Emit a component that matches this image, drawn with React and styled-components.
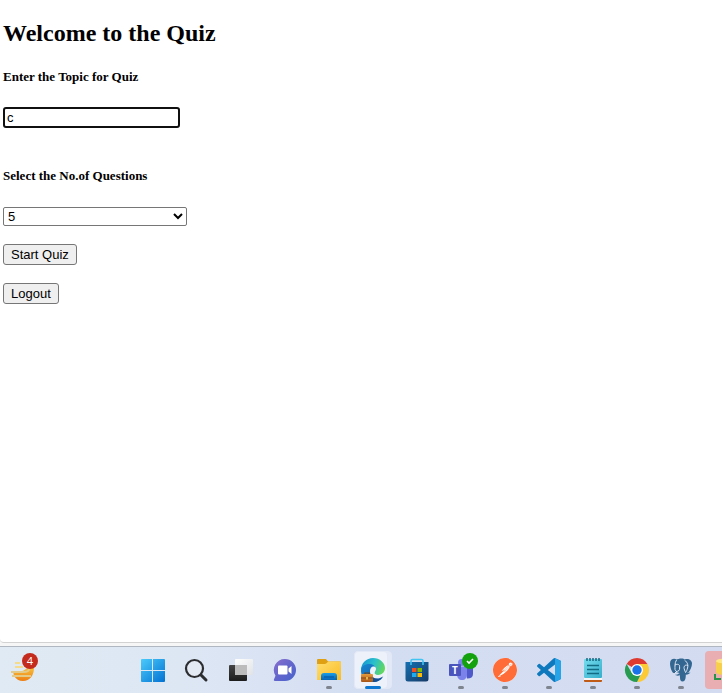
import React, { useState } from "react";
import styled, { createGlobalStyle, css } from "styled-components";
import { SiPostman } from "react-icons/si";

const GlobalStyle = createGlobalStyle`
  *, *::before, *::after { box-sizing: border-box; }
  body { margin: 0; background: #fff; overflow: hidden; }
`;

const Screen = styled.div`
  display: flex;
  flex-direction: column;
  min-height: 100vh;
  background: #f6f6f6;
  overflow: hidden;
`;

const Page = styled.main`
  flex: 1;
  padding: 20px 3px;
  margin-bottom: 3px;
  background: #fff;
  border-bottom: 1px solid #d2d2d2;
  border-bottom-left-radius: 4px;
  color: #000;
  font-family: "Liberation Serif", "Times New Roman", serif;
`;

const Title = styled.h2`
  margin: 0 0 22px;
  font-size: 24px;
  line-height: 27px;
  font-weight: bold;
`;

const Form = styled.form`
  display: flex;
  flex-direction: column;
  align-items: flex-start;
`;

const Field = styled.div`
  display: flex;
  flex-direction: column;
  align-items: flex-start;
  gap: ${(p) => p.$gap};
  margin-bottom: ${(p) => p.$after};
`;

const Label = styled.label`
  font-size: 13px;
  line-height: 15px;
  font-weight: bold;
`;

const controlFont = css`
  font-family: "Liberation Sans", Arial, sans-serif;
  font-size: 13px;
  color: #000;
`;

const TopicInput = styled.input`
  ${controlFont}
  width: 177px;
  height: 21px;
  padding: 0 2px;
  border: 2px solid #101010;
  border-radius: 3px;
  background: #fff;
  outline: none;
`;

const CountSelect = styled.select`
  ${controlFont}
  width: 184px;
  height: 19px;
  border: 1px solid #767676;
  border-radius: 2px;
  background: #fff;
`;

const Buttons = styled.div`
  display: flex;
  flex-direction: column;
  align-items: flex-start;
  gap: 18px;
`;

const Button = styled.button`
  ${controlFont}
  height: 21px;
  padding: 0 7px;
  border: 1px solid #767676;
  border-radius: 3px;
  background: #efefef;
`;

const Taskbar = styled.nav`
  display: flex;
  flex: none;
  padding: 4px 0 4px 1px;
  border-top: 1px solid #b1b7c1;
  background: linear-gradient(90deg, #dfeaf4 0%, #dde7f4 25%, #d4def2 50%, #d3dbf0 100%);
`;

const Apps = styled.div`
  display: flex;
  margin-left: 86px;
`;

const Task = styled.button`
  position: relative;
  display: flex;
  flex: none;
  align-items: center;
  justify-content: center;
  width: 44px;
  height: 38px;
  padding: 0;
  border: 0;
  background: none;

  svg {
    position: relative;
    display: block;
    overflow: visible;
  }

  ${(p) => p.$active && css`
    &::before, &::after {
      content: "";
      position: absolute;
      top: 0;
      bottom: 0;
      left: 3px;
      border-radius: 4px;
      border: 1px solid #e2e8f5;
    }
    &::before { right: 3px; background: #e3e9f6; }
    &::after { right: 7px; background: #edf1fa; }
    svg { z-index: 1; }
  `}

  ${(p) => p.$alert && css`
    margin-left: 2px;
    width: 40px;
    border-radius: 4px;
    background: #e8aeb1;
  `}
`;

const Indicator = styled.span`
  position: absolute;
  z-index: 2;
  bottom: 0;
  left: 50%;
  transform: translateX(-50%);
  width: ${(p) => (p.$active ? "16px" : "6px")};
  height: 3px;
  border-radius: 2px;
  background: ${(p) => (p.$active ? "#0c76d1" : "#7e858f")};
`;

const Badge = styled.span`
  position: absolute;
  z-index: 2;
  top: 2px;
  left: 21px;
  width: 16px;
  height: 16px;
  border-radius: 50%;
  background: #c42b1c;
  color: #fff;
  font: 11px/16px "Open Sans", sans-serif;
  text-align: center;
`;

const PostmanDisc = styled.span`
  display: flex;
  border-radius: 50%;
  background: #fff;
  color: #ff6c37;
`;

const Svg = ({ children }) => (
  <svg width="24" height="24" viewBox="0 0 24 24" aria-hidden="true">{children}</svg>
);

const WidgetIcon = () => (
  <Svg>
    <defs>
      <linearGradient id="sun" x1="0" y1="0" x2="0" y2="1">
        <stop offset="0" stopColor="#f8bf3c" /><stop offset="1" stopColor="#ee7d12" />
      </linearGradient>
    </defs>
    <path d="M2 13h9c3 0 3-3 7-3h5c0 7-4 13-11 13-4 0-7-2-9-5z" fill="url(#sun)" />
    <path d="M4 5h5M4 9h8" stroke="#f5dc8c" strokeWidth="2" />
    <path d="M0 14h12c4 0 6-1 6-3M1 18h19" fill="none" stroke="#e4ca88" strokeWidth="2" />
  </Svg>
);

const WindowsIcon = () => (
  <Svg>
    <defs>
      <linearGradient id="win" x1="0" y1="0" x2="1" y2="1">
        <stop offset="0" stopColor="#4bcbfb" /><stop offset="1" stopColor="#0271d2" />
      </linearGradient>
    </defs>
    <path d="M1 1h10v11H0V2a1 1 0 0 1 1-1zM12 1h11a1 1 0 0 1 1 1v10H12zM0 13h11v11H1a1 1 0 0 1-1-1zM12 13h12v10a1 1 0 0 1-1 1H12z" fill="url(#win)" />
  </Svg>
);

const SearchIcon = () => (
  <Svg>
    <circle cx="9.500" cy="10.500" r="8.500" fill="#e9edf2" fillOpacity=".6" stroke="#2c2d30" strokeWidth="2.200" />
    <path d="M16 17l5 5" stroke="#2c2d30" strokeWidth="3" strokeLinecap="round" />
  </Svg>
);

const TaskViewIcon = () => (
  <Svg>
    <defs>
      <linearGradient id="dark" x1="0" y1="0" x2="0" y2="1">
        <stop offset="0" stopColor="#454545" /><stop offset="1" stopColor="#1c1c1c" />
      </linearGradient>
      <linearGradient id="pale" x1="0" y1="0" x2="1" y2="1">
        <stop offset="0" stopColor="#fff" /><stop offset="1" stopColor="#e0e2e5" />
      </linearGradient>
    </defs>
    <rect x="0" y="7" width="18" height="16" rx="1" fill="url(#dark)" />
    <rect x="6" y="1" width="18" height="16" rx="1" fill="url(#pale)" />
    <path d="M6 7h12v10H7a1 1 0 0 1-1-1z" fill="#bcbcbd" />
  </Svg>
);

const ChatIcon = () => (
  <Svg>
    <defs>
      <linearGradient id="chat" x1="0" y1="0" x2="1" y2="1">
        <stop offset="0" stopColor="#8a70ce" /><stop offset=".5" stopColor="#6265cc" /><stop offset="1" stopColor="#4662cc" />
      </linearGradient>
    </defs>
    <path d="M12 1a11 11 0 1 1 0 22H2c-1 0-1.500-.8-1-1.700l1.500-3.500A11 11 0 0 1 12 1z" fill="url(#chat)" />
    <rect x="5" y="7.500" width="9.500" height="9" rx="1" fill="#fff" />
    <path d="M15.500 10.500l3-2.500v8l-3-2.500z" fill="#fff" />
  </Svg>
);

const FolderIcon = () => (
  <Svg>
    <defs>
      <linearGradient id="folder" x1="0" y1="0" x2="1" y2="1">
        <stop offset="0" stopColor="#ffdf70" /><stop offset="1" stopColor="#fabb22" />
      </linearGradient>
      <linearGradient id="tray" x1="0" y1="0" x2="0" y2="1">
        <stop offset="0" stopColor="#1b9de6" /><stop offset="1" stopColor="#0765b7" />
      </linearGradient>
    </defs>
    <path d="M0 2a1 1 0 0 1 1-1h8l2 2.500h12a1 1 0 0 1 1 1V9H0z" fill="#dfa013" />
    <path d="M0 6h8c2 0 2-2.500 4-2.500h11a1 1 0 0 1 1 1V22H0z" fill="url(#folder)" />
    <path d="M4 22v-4a3 3 0 0 1 3-3h10a3 3 0 0 1 3 3v4z" fill="url(#tray)" />
    <path d="M7 19h10" stroke="#0962ac" strokeWidth="1.500" />
  </Svg>
);

const EdgeIcon = () => (
  <Svg>
    <defs>
      <linearGradient id="edgeTop" x1="0" y1=".3" x2="1" y2=".6">
        <stop offset="0" stopColor="#1597d4" /><stop offset=".5" stopColor="#2bc0cc" /><stop offset="1" stopColor="#66d957" />
      </linearGradient>
      <linearGradient id="edgeSide" x1="0" y1="0" x2="1" y2="1">
        <stop offset="0" stopColor="#1a86cf" /><stop offset="1" stopColor="#0b5dae" />
      </linearGradient>
      <linearGradient id="case" x1="0" y1="0" x2="0" y2="1">
        <stop offset="0" stopColor="#e59a3c" /><stop offset="1" stopColor="#a65416" />
      </linearGradient>
    </defs>
    <path d="M0 12A12 12 0 0 1 12 0c7 0 12 5 12 10 0 4-3 7-7 7-3 0-5-1-4-3l-2-4-7 0z" fill="url(#edgeTop)" />
    <path d="M0 13C0 8 4 6 8 6c4 0 6 2 6.500 4C11 9 9 12 9.500 15c.5 3 4 6 8 6 2 0 4-1 5-3-2 4-6 6-10.500 6C5 24 0 19 0 13z" fill="url(#edgeSide)" />
    <path d="M9 14c0 5 4 7 8 6.500 2-.3 4-1.200 5-2.500-2 4-6 6-10 6-4-1-5-7-3-10z" fill="#124f96" />
    <path d="M9 13c0-3 2-5 4-4.500 2.500.5 2.500 3 1 5-1 2 0 3.500 3 3.500 2.500 0 4-.5 5-1.500 0 2-1 3-2 3.500-5 2.500-11-1-11-6z" fill="#edf1fa" />
    <path d="M4 17v-2h4v2" fill="none" stroke="#75420f" strokeWidth="1.200" />
    <rect x="0" y="16" width="12" height="8" rx="1" fill="url(#case)" />
    <path d="M0 20h12" stroke="#874512" />
    <path d="M6 19v2.500" stroke="#ffd35c" strokeWidth="1.500" />
  </Svg>
);

const StoreIcon = () => (
  <Svg>
    <defs>
      <linearGradient id="bag" x1="0" y1="0" x2="1" y2="1">
        <stop offset="0" stopColor="#1570b1" /><stop offset="1" stopColor="#173b67" />
      </linearGradient>
    </defs>
    <path d="M.5 4h23v17a2.500 2.500 0 0 1-2.500 2.500H3A2.500 2.500 0 0 1 .5 21z" fill="url(#bag)" />
    <path d="M6 7V3a1.500 1.500 0 0 1 1.500-1.500h9A1.500 1.500 0 0 1 18 3v4" fill="none" stroke="#42c4f2" strokeWidth="1.600" />
    <path d="M7 10h4.500v4H7z" fill="#f25022" />
    <path d="M12.500 10H17v4h-4.500z" fill="#7fba00" />
    <path d="M7 15h4.500v4H7z" fill="#1eaaf0" />
    <path d="M12.500 15H17v4h-4.500z" fill="#ffb900" />
  </Svg>
);

const TeamsIcon = () => (
  <Svg>
    <circle cx="12.500" cy="4.500" r="3.500" fill="#7b83eb" />
    <path d="M16 9h8v7c0 3-2 4.500-6 4.500z" fill="#5059c9" />
    <path d="M8 8.500h10V16c0 4-2 6-5 6s-5-2-5-6z" fill="#7b83eb" />
    <rect x="0" y="6" width="12" height="12" rx="1" fill="#4b53bc" />
    <text x="6" y="15.500" fill="#fff" fontFamily="Open Sans, sans-serif" fontWeight="bold" fontSize="10" textAnchor="middle">T</text>
    <circle cx="21" cy="3" r="8" fill="#13a10e" />
    <path d="M18 3l2 2 4-4" fill="none" stroke="#fff" strokeWidth="1.600" />
  </Svg>
);

const VsCodeIcon = () => (
  <Svg>
    <path d="M23.150 2.587L18.210.210a1.494 1.494 0 0 0-1.705.290l-9.460 8.630-4.120-3.128a.999.999 0 0 0-1.276.057L.327 7.261A1 1 0 0 0 .326 8.740L3.899 12 .326 15.260a1 1 0 0 0 .001 1.479L1.650 17.940a.999.999 0 0 0 1.276.057l4.120-3.128 9.460 8.630a1.492 1.492 0 0 0 1.704.290l4.942-2.377A1.500 1.500 0 0 0 24 20.060V3.939a1.500 1.500 0 0 0-.850-1.352zm-5.146 14.861L10.826 12l7.178-5.448v10.896z" fill="#0f79bd" />
    <path d="M18 .2l5.200 2.400c.5.300.8.800.8 1.400v16c0 .6-.3 1.100-.8 1.400L18 23.800z" fill="#27a3e8" />
  </Svg>
);

const NotepadIcon = () => (
  <Svg>
    <defs>
      <linearGradient id="note" x1="0" y1="0" x2="1" y2="1">
        <stop offset="0" stopColor="#75dced" /><stop offset="1" stopColor="#35aecb" />
      </linearGradient>
    </defs>
    <rect x="3" y="19" width="18" height="5" rx="1" fill="#bf5b16" />
    <rect x="3" y="18" width="18" height="4" fill="#f5f5f5" />
    <rect x="3" y="1" width="18" height="19" rx="1" fill="url(#note)" />
    <path d="M6 0v3M9 0v3M12 0v3M15 0v3M18 0v3" stroke="#126079" strokeWidth="1.400" />
    <path d="M6 7.500h12M6 11.500h12M6 15.500h12" stroke="#136a83" strokeWidth="1.500" />
  </Svg>
);

const ChromeIcon = () => (
  <Svg>
    <path d="M12 12L1.600 6A12 12 0 0 1 22.400 6z" fill="#df3a2f" />
    <path d="M12 12V6h10.400A12 12 0 0 1 12 24l5.200-9z" fill="#fcca35" />
    <path d="M1.600 6l5.200 9L12 18l3.500-1L12 24A12 12 0 0 1 1.600 6z" fill="#279b50" />
    <circle cx="12" cy="12" r="6" fill="#fff" />
    <circle cx="12" cy="12" r="4.700" fill="#1a73e8" />
  </Svg>
);

const PgIcon = () => (
  <Svg>
    <g fill="#336791">
      <path d="M7.500 1.500C5 0 1 1 1 5.500c0 3 1.500 8.500 3.500 9.500 1.500.5 2.500-1 3.500-2z" />
      <path d="M16 1.500c3-1.500 7 .5 7 4 0 3-2 7-3.500 9l-3 .5z" />
      <path d="M7 2c3-2 8-2 10 0l1.500 7-1.500 5-.3 5c-.2 3-1.500 4.500-3.200 4.500S11 22 11 19.500L10.500 15 7 14z" />
      <path d="M16 14c1.500 1 3.500.8 5.500.5-1 1.500-3.500 2.500-5.500 2z" />
      <path d="M10.500 14.500c-1 2-3 2.500-4.500 2 .5 1.200 3.500 1.700 5 .5z" />
    </g>
    <g fill="none" stroke="#dfe5f3" strokeWidth="1">
      <path d="M7.500 2C5.500 5 6 9 6 11.500c.5 2 2 2.500 4 1 1-1.500.5-3.500.5-5-1-1.500-3-1.500-4.500-.5" />
      <path d="M15.500 2c3 2.500 4 5 3 8-.5 2-1 3.500-2 4.500-.5-2-1.500-3-1.500-5s2-3 4-2" />
      <path d="M8 13l-2 2" />
    </g>
  </Svg>
);

const PostmanIcon = () => (
  <PostmanDisc><SiPostman size={24} aria-hidden="true" /></PostmanDisc>
);

const DatabaseIcon = () => (
  <Svg>
    <path d="M3 3v11c0 2 4 3 9 3s9-1 9-3V3z" fill="#f8cf4c" />
    <ellipse cx="12" cy="3" rx="9" ry="2.500" fill="#ffe785" />
    <path d="M2 16v5h6" fill="none" stroke="#269447" strokeWidth="2" />
  </Svg>
);

const apps = [
  { name: "Start", Icon: WindowsIcon },
  { name: "Search", Icon: SearchIcon },
  { name: "Task view", Icon: TaskViewIcon },
  { name: "Chat", Icon: ChatIcon },
  { name: "File Explorer", Icon: FolderIcon, running: true },
  { name: "Edge", Icon: EdgeIcon, running: true, active: true },
  { name: "Store", Icon: StoreIcon },
  { name: "Teams", Icon: TeamsIcon, running: true },
  { name: "Postman", Icon: PostmanIcon, running: true },
  { name: "VS Code", Icon: VsCodeIcon, running: true },
  { name: "Notepad", Icon: NotepadIcon, running: true },
  { name: "Chrome", Icon: ChromeIcon, running: true },
  { name: "PostgreSQL", Icon: PgIcon, running: true },
  { name: "Database", Icon: DatabaseIcon, alert: true },
];

export default function App() {
  const [topic, setTopic] = useState("c");
  const [count, setCount] = useState("5");

  return (
    <Screen>
      <GlobalStyle />
      <Page>
        <Title>Welcome to the Quiz</Title>
        <Form onSubmit={(e) => e.preventDefault()}>
          <Field $gap="23px" $after="40px">
            <Label htmlFor="topic">Enter the Topic for Quiz</Label>
            <TopicInput id="topic" type="text" value={topic} onChange={(e) => setTopic(e.target.value)} />
          </Field>
          <Field $gap="24px" $after="18px">
            <Label htmlFor="count">Select the No.of Questions</Label>
            <CountSelect id="count" value={count} onChange={(e) => setCount(e.target.value)}>
              <option>5</option>
              <option>10</option>
              <option>15</option>
            </CountSelect>
          </Field>
          <Buttons>
            <Button type="submit">Start Quiz</Button>
            <Button type="button">Logout</Button>
          </Buttons>
        </Form>
      </Page>
      <Taskbar aria-label="Taskbar">
        <Task aria-label="Widgets">
          <WidgetIcon />
          <Badge>4</Badge>
        </Task>
        <Apps>
          {apps.map(({ name, Icon, running, active, alert }) => (
            <Task key={name} aria-label={name} $active={active} $alert={alert}>
              <Icon />
              {running && <Indicator $active={active} />}
            </Task>
          ))}
        </Apps>
      </Taskbar>
    </Screen>
  );
}
